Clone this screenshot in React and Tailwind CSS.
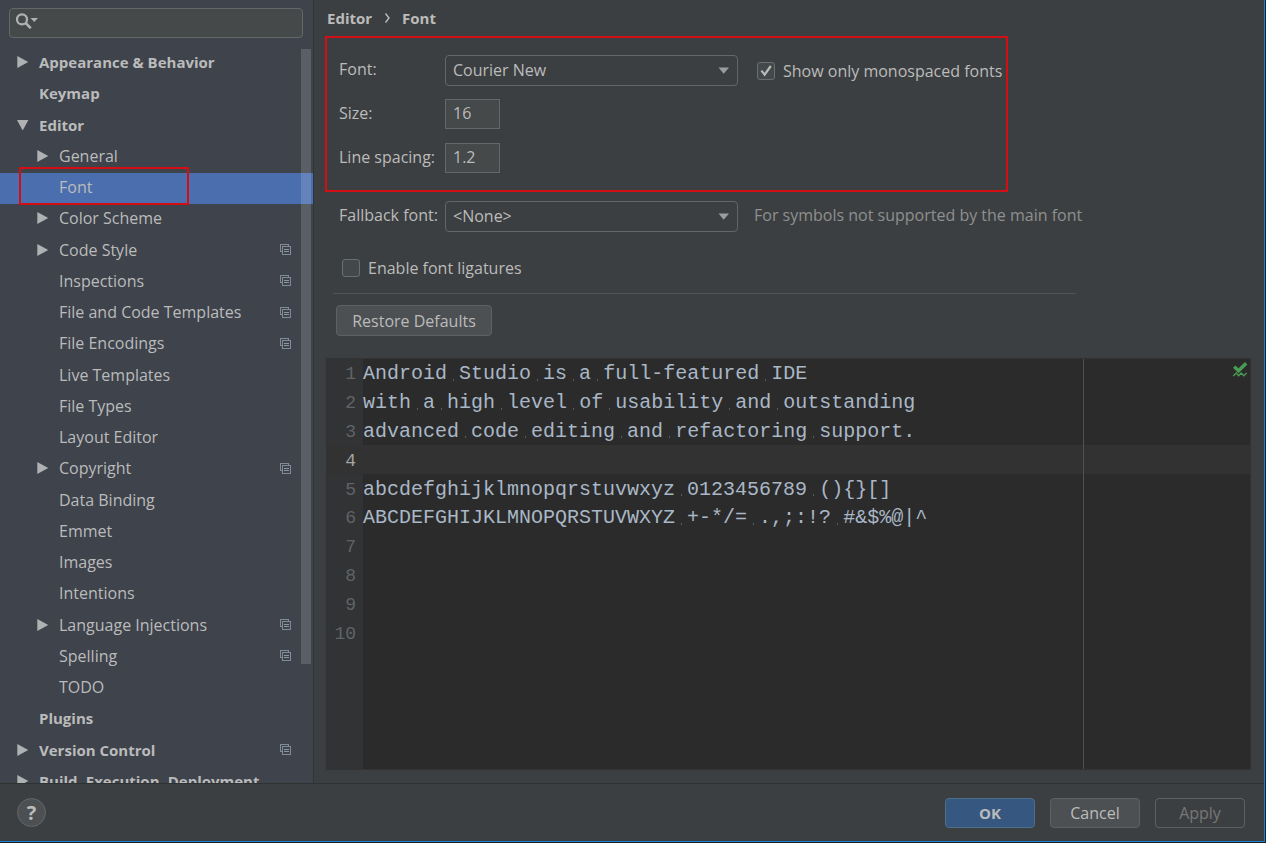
import { useState } from "react";

const TREE = [
  { label: "Appearance & Behavior", level: 0, arrow: "right" },
  { label: "Keymap", level: 0 },
  { label: "Editor", level: 0, arrow: "down" },
  { label: "General", level: 1, arrow: "right" },
  { label: "Font", level: 1, selected: true },
  { label: "Color Scheme", level: 1, arrow: "right" },
  { label: "Code Style", level: 1, arrow: "right", scoped: true },
  { label: "Inspections", level: 1, scoped: true },
  { label: "File and Code Templates", level: 1, scoped: true },
  { label: "File Encodings", level: 1, scoped: true },
  { label: "Live Templates", level: 1 },
  { label: "File Types", level: 1 },
  { label: "Layout Editor", level: 1 },
  { label: "Copyright", level: 1, arrow: "right", scoped: true },
  { label: "Data Binding", level: 1 },
  { label: "Emmet", level: 1 },
  { label: "Images", level: 1 },
  { label: "Intentions", level: 1 },
  { label: "Language Injections", level: 1, arrow: "right", scoped: true },
  { label: "Spelling", level: 1, scoped: true },
  { label: "TODO", level: 1 },
  { label: "Plugins", level: 0 },
  { label: "Version Control", level: 0, arrow: "right", scoped: true },
  { label: "Build, Execution, Deployment", level: 0, arrow: "right" },
];

const CODE = [
  "Android Studio is a full-featured IDE",
  "with a high level of usability and outstanding",
  "advanced code editing and refactoring support.",
  "",
  "abcdefghijklmnopqrstuvwxyz 0123456789 (){}[]",
  "ABCDEFGHIJKLMNOPQRSTUVWXYZ +-*/= .,;:!? #&$%@|^",
  "",
  "",
  "",
  "",
];

function Arrow({ dir }) {
  return (
    <svg className="h-3 w-3 shrink-0" viewBox="0 0 12 12" fill="#afb1b3" aria-hidden="true">
      {dir === "right" && <path d="M0.3 0 L11.3 6 L0.3 12 Z" />}
      {dir === "down" && <path d="M0 1 L11.4 1 L5.7 11.5 Z" />}
    </svg>
  );
}

function ScopeIcon() {
  return (
    <svg className="h-[11px] w-[11px] shrink-0" viewBox="0 0 11 11" aria-hidden="true" shapeRendering="crispEdges">
      <path d="M0 0h9v1H0zM0 0h1v8H0zM0 7h2v1H0z" fill="#7f8b96" />
      <path d="M8 0h1v2H8z" fill="#7f8b96" />
      <path d="M2 2h9v9H2z" fill="#7f8b96" />
      <path d="M3 3h7v7H3z" fill="#3e434c" />
      <path d="M4 5h5v1H4zM4 7h5v1H4z" fill="#8a96a0" />
    </svg>
  );
}

function TreeRow({ item }) {
  return (
    <li className={item.selected ? "relative bg-[#4b6eaf]" : ""}>
      <button
        type="button"
        className={
          "flex h-full w-full items-center gap-2.5 pr-[22px] pb-[3px] text-left whitespace-nowrap " +
          (item.level === 0 ? "pl-[17px] text-[15px] font-bold" : "pl-[37px]")
        }
      >
        <Arrow dir={item.arrow} />
        <span className="flex-1">{item.label}</span>
        {item.scoped && <ScopeIcon />}
      </button>
      {item.selected && (
        <span className="pointer-events-none absolute -top-1.5 left-[19px] h-[38px] w-[170px] border-2 border-[#d40f14]" />
      )}
    </li>
  );
}

function Sidebar() {
  return (
    <aside className="relative flex w-[314px] shrink-0 flex-col overflow-hidden border-r border-[#323537] bg-[#3e434c]">
      <div className="mx-[9px] mt-2 mr-2.5 flex h-[30px] shrink-0 items-center rounded border border-[#646767] bg-[#45494a] pl-1.5">
        <svg className="mb-1 h-4 w-6 shrink-0" viewBox="0 0 24 16" fill="none" aria-hidden="true">
          <circle cx="6" cy="6.4" r="5" stroke="#afb1b3" strokeWidth="2.3" />
          <path d="M9.5 9.9 L14.8 15.2" stroke="#afb1b3" strokeWidth="2.6" />
          <path d="M14.5 5 H22 L18.2 9 Z" fill="#afb1b3" />
        </svg>
        <input
          type="search"
          aria-label="Search settings"
          className="min-w-0 flex-1 bg-transparent px-1 outline-none"
        />
      </div>
      <ul className="mt-2.5 grid h-[750px] shrink-0 auto-rows-fr">
        {TREE.map((item) => (
          <TreeRow key={item.label} item={item} />
        ))}
      </ul>
      <div className="pointer-events-none absolute top-[49px] right-0.5 h-[615px] w-2.5 bg-white/15" />
    </aside>
  );
}

function Select({ id, value, options }) {
  return (
    <div className="relative w-[293px]">
      <select
        id={id}
        defaultValue={value}
        className="h-[31px] w-full appearance-none rounded border border-[#646767] bg-[#3c3f41] px-[7px] pb-0.5 outline-none"
      >
        {options.map((o) => (
          <option key={o}>{o}</option>
        ))}
      </select>
      <svg
        className="pointer-events-none absolute top-3 right-2 h-[7px] w-3"
        viewBox="0 0 12 7"
        fill="#9a9da0"
        aria-hidden="true"
      >
        <path d="M0.5 0.5 H11 L5.7 6.8 Z" />
      </svg>
    </div>
  );
}

function Checkbox({ label, defaultChecked }) {
  const [checked, setChecked] = useState(Boolean(defaultChecked));
  return (
    <label className="flex items-center gap-2 leading-5 whitespace-nowrap">
      <span className="relative flex">
        <input
          type="checkbox"
          checked={checked}
          onChange={(e) => setChecked(e.target.checked)}
          className="h-[18px] w-[18px] appearance-none rounded-[3px] border border-[#6b6e6f] bg-[#43494a]"
        />
        {checked && (
          <svg className="pointer-events-none absolute inset-0 h-[18px] w-[18px]" viewBox="0 0 18 18" fill="none" aria-hidden="true">
            <path d="M4.4 8.6 L7.6 12.6 L13.8 4" stroke="#bbbbbb" strokeWidth="2.2" />
          </svg>
        )}
      </span>
      {label}
    </label>
  );
}

function CodeText({ text }) {
  return text.split(/( )/).map((part, i) =>
    part === " " ? (
      <span
        key={i}
        className="bg-[linear-gradient(#58595a,#58595a)] bg-[length:1px_2px] bg-[position:50%_78%] bg-no-repeat"
      >
        {" "}
      </span>
    ) : (
      part
    )
  );
}

function Preview() {
  return (
    <div className="relative mr-[13px] mb-[13px] ml-3 flex-1 overflow-hidden border border-[#323232] bg-[#2b2b2b] font-['Liberation_Mono','Courier_New',monospace] text-xl">
      <div className="h-full w-9 bg-[#313335]" />
      <ol className="absolute inset-x-0 top-0 grid h-[288px] auto-rows-fr">
        {CODE.map((line, i) => (
          <li key={i} className={"flex items-center pt-0.5 leading-6 " + (i === 3 ? "bg-[#323232]" : "")}>
            <span
              className={
                "w-9 shrink-0 pr-[7px] text-right text-lg/6 " +
                (i === 3 ? "text-[#a4a3a3]" : "text-[#606366]")
              }
            >
              {i + 1}
            </span>
            <code className="whitespace-pre text-[#a9b7c6] font-['Liberation_Mono','Courier_New',monospace]">
              <CodeText text={line} />
            </code>
          </li>
        ))}
      </ol>
      <div className="pointer-events-none absolute inset-y-0 left-0 w-[757px] border-r border-[#4f5152]" />
      <svg className="absolute top-0.5 right-0.5 h-4 w-4" viewBox="0 0 16 16" fill="none" aria-hidden="true">
        <path d="M2.2 5.6 L6.5 9.8 L14.2 2.2" stroke="#499c54" strokeWidth="3.4" />
        <path d="M1.2 15 L4.2 12 L6.7 14.8 L9.2 12 L11.7 14.8 L14.7 12" stroke="#499c54" strokeWidth="1.3" />
      </svg>
    </div>
  );
}

function FontSettings() {
  const field = "h-[30px] w-[55px] border border-[#646767] bg-[#45494a] px-[7px] pb-0.5 outline-none";
  return (
    <main className="flex min-w-0 flex-1 flex-col">
      <nav aria-label="Breadcrumb" className="flex h-9 items-center pl-[13px] text-[15px] font-bold">
        <a href="#editor">Editor</a>
        <svg className="mx-3 h-2.5 w-1.5" viewBox="0 0 6 10" fill="none" aria-hidden="true">
          <path d="M1.5 0.5 L5 5 L1.5 9.5" stroke="#bbbbbb" strokeWidth="1.4" />
        </svg>
        <a href="#font">Font</a>
      </nav>

      <section className="ml-[11px] flex h-[156px] w-[683px] flex-col gap-[13px] border-2 border-[#d40f14] pt-[17px] pl-3 leading-7">
        <div className="flex h-[31px]">
          <label htmlFor="font" className="w-[106px]">Font:</label>
          <Select id="font" value="Courier New" options={["Courier New", "Consolas"]} />
          <div className="ml-[19px] flex items-center">
            <Checkbox label="Show only monospaced fonts" defaultChecked />
          </div>
        </div>
        <div className="flex h-[31px]">
          <label htmlFor="size" className="w-[106px]">Size:</label>
          <input id="size" type="text" defaultValue="16" className={field} />
        </div>
        <div className="flex h-[31px]">
          <label htmlFor="spacing" className="w-[106px]">Line spacing:</label>
          <input id="spacing" type="text" defaultValue="1.2" className={field} />
        </div>
      </section>

      <div className="mt-[9px] flex h-[31px] pl-[25px] leading-[29px] whitespace-nowrap">
        <label htmlFor="fallback" className="w-[106px]">Fallback font:</label>
        <Select id="fallback" value="<None>" options={["<None>", "Consolas"]} />
        <span className="ml-4 text-[#8f8f8f]">For symbols not supported by the main font</span>
      </div>

      <div className="mt-[26px] flex pl-7">
        <Checkbox label="Enable font ligatures" />
      </div>

      <hr className="mt-[15px] ml-[19px] w-[743px] border-[#515456]" />

      <button
        type="button"
        className="mt-[11px] mb-[22px] ml-[22px] h-[31px] w-[156px] shrink-0 rounded border border-[#5e6162] bg-[#4c5052]"
      >
        Restore Defaults
      </button>

      <Preview />
    </main>
  );
}

export default function App() {
  return (
    <div className="h-screen bg-[#1d2023] pr-px pb-px font-['Open_Sans','Noto_Sans',sans-serif] text-base/5 text-[#bbbbbb]">
      <div className="flex h-full flex-col overflow-hidden border-r border-b border-[#1b80d4] bg-[#3c3f41]">
        <div className="flex min-h-0 flex-1">
          <Sidebar />
          <FontSettings />
        </div>
        <footer className="flex h-[58px] shrink-0 items-center gap-[15px] border-t border-[#2f3233] pr-[19px] pl-[17px]">
          <button
            type="button"
            aria-label="Help"
            className="mr-auto flex h-[29px] w-[29px] items-center justify-center rounded-full border border-[#646767] bg-[#4c5052]"
          >
            <span className="text-xl font-bold">?</span>
          </button>
          <button type="button" className="h-[30px] w-[90px] rounded border border-[#4c708c] bg-[#365880] text-[15px] font-bold">
            OK
          </button>
          <button type="button" className="h-[30px] w-[90px] rounded border border-[#5e6162] bg-[#4c5052]">
            Cancel
          </button>
          <button type="button" disabled className="h-[30px] w-[90px] rounded border border-[#5e6162] text-[#777777]">
            Apply
          </button>
        </footer>
      </div>
    </div>
  );
}
